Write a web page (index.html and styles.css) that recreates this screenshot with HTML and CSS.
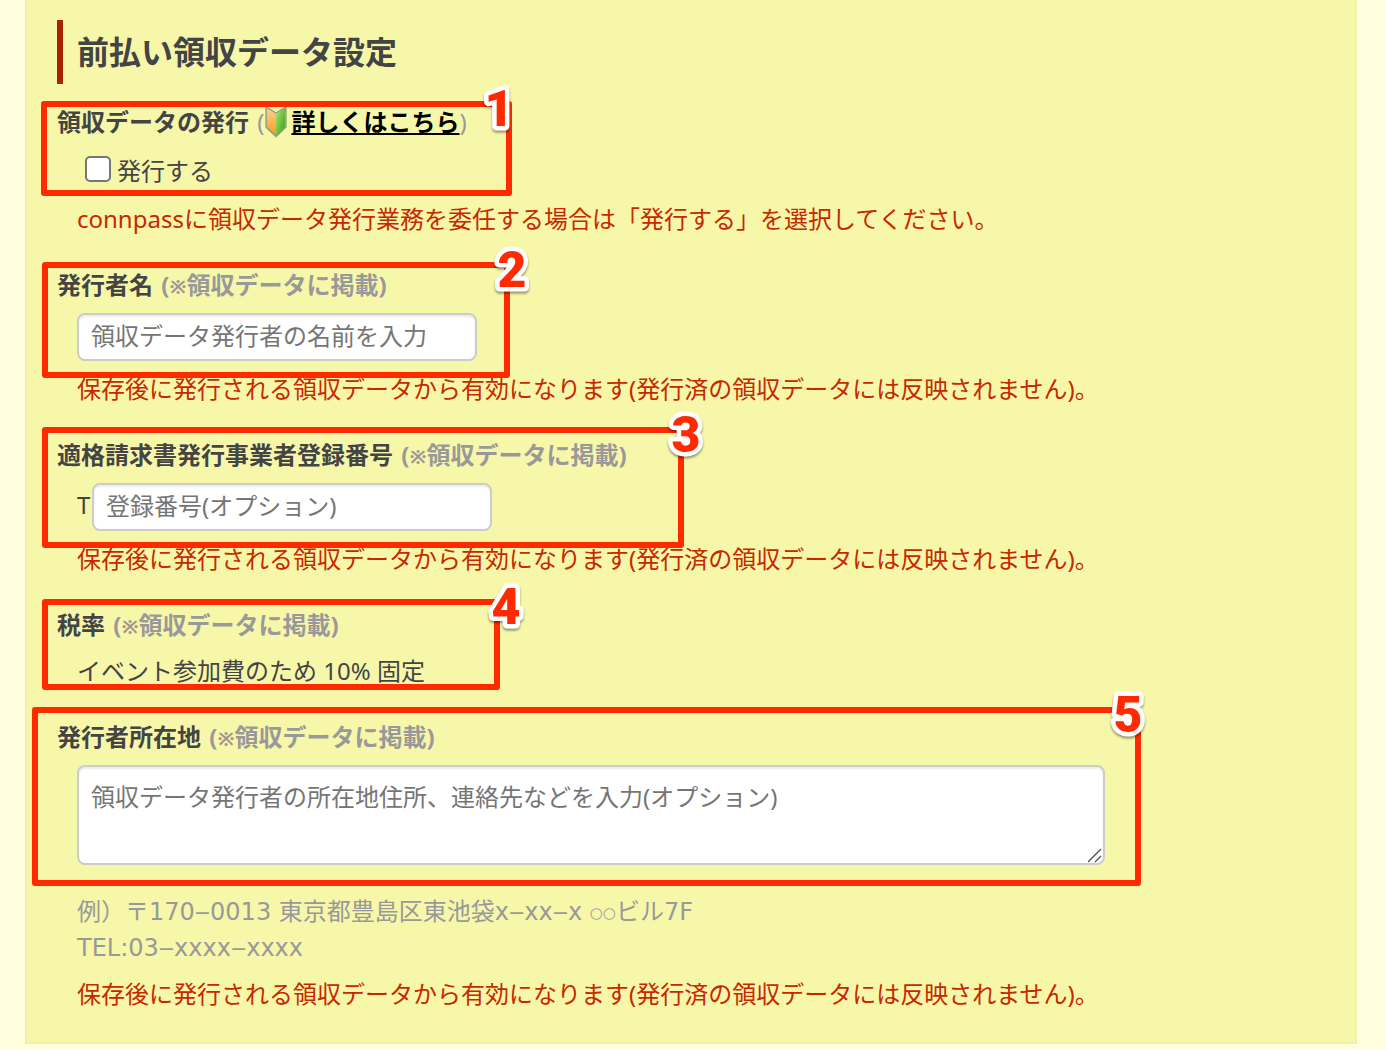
FILE: index.html
```html
<!DOCTYPE html>
<html lang="ja">
<head>
    <meta charset="UTF-8">
    <meta name="viewport" content="width=device-width, initial-scale=1.0">
    <title>前払い領収データ設定</title>
    <link rel="stylesheet" href="styles.css">
</head>
<body>
    <form class="panel">
        <h2 class="panel-title">前払い領収データ設定</h2>

        <div class="field">
            <div class="field-label">領収データの発行 <span class="note note-plain">(<svg class="beginner-icon" viewBox="0 0 24 32" aria-hidden="true">
                <defs>
                    <linearGradient id="leafLeft" x1="0" y1="0" x2="0" y2="1">
                        <stop offset="0" stop-color="#ffd08a"/>
                        <stop offset="1" stop-color="#f79a1c"/>
                    </linearGradient>
                    <linearGradient id="leafRight" x1="0" y1="0" x2="1" y2="1">
                        <stop offset="0" stop-color="#a4e878"/>
                        <stop offset="1" stop-color="#3f9a10"/>
                    </linearGradient>
                </defs>
                <path d="M2 1 L12 8 L22 1 V21 L12 31 L2 21 Z" fill="#8c8c6c" opacity=".5"/>
                <path d="M3 1 L12 7 V29 L3 20 Z" fill="url(#leafLeft)"/>
                <path d="M21 1 L12 7 V29 L21 20 Z" fill="url(#leafRight)"/>
                <path d="M2 0 L12 6 L22 0 V20 L12 29 L2 20 Z" fill="none" stroke="#85987a" stroke-width="1.2"/>
            </svg><a class="help-link" href="#">詳しくはこちら</a>)</span></div>
            <div class="field-body">
                <label class="check-row">
                    <input class="checkbox" type="checkbox">
                    <span>発行する</span>
                </label>
                <p class="hint">connpassに領収データ発行業務を委任する場合は「発行する」を選択してください。</p>
            </div>
            <div class="callout callout-1">
                <svg class="callout-number" viewBox="0 0 48 56"><text x="24" y="46">1</text></svg>
            </div>
        </div>

        <div class="field">
            <label class="field-label" for="issuerName">発行者名 <span class="note">(<span class="mark">※</span>領収データに掲載)</span></label>
            <div class="field-body">
                <input class="text-input" type="text" id="issuerName" placeholder="領収データ発行者の名前を入力">
                <p class="hint">保存後に発行される領収データから有効になります(発行済の領収データには反映されません)。</p>
            </div>
            <div class="callout callout-2">
                <svg class="callout-number" viewBox="0 0 48 56"><text x="24" y="46">2</text></svg>
            </div>
        </div>

        <div class="field">
            <label class="field-label" for="registrationNumber">適格請求書発行事業者登録番号 <span class="note">(<span class="mark">※</span>領収データに掲載)</span></label>
            <div class="field-body">
                <div class="prefix-row">
                    <span class="prefix">T</span>
                    <input class="text-input" type="text" id="registrationNumber" placeholder="登録番号(オプション)">
                </div>
                <p class="hint">保存後に発行される領収データから有効になります(発行済の領収データには反映されません)。</p>
            </div>
            <div class="callout callout-3">
                <svg class="callout-number" viewBox="0 0 48 56"><text x="24" y="46">3</text></svg>
            </div>
        </div>

        <div class="field">
            <div class="field-label">税率 <span class="note">(<span class="mark">※</span>領収データに掲載)</span></div>
            <div class="field-body">
                <p class="value">イベント参加費のため 10% 固定</p>
            </div>
            <div class="callout callout-4">
                <svg class="callout-number" viewBox="0 0 48 56"><text x="24" y="46">4</text></svg>
            </div>
        </div>

        <div class="field">
            <label class="field-label" for="issuerAddress">発行者所在地 <span class="note">(<span class="mark">※</span>領収データに掲載)</span></label>
            <div class="field-body">
                <textarea class="text-area" id="issuerAddress" placeholder="領収データ発行者の所在地住所、連絡先などを入力(オプション)"></textarea>
                <p class="sample">例）〒170‒0013 東京都豊島区東池袋x‒xx‒x <span class="circles">○○</span>ビル7F<br>TEL:03‒xxxx‒xxxx</p>
                <p class="hint">保存後に発行される領収データから有効になります(発行済の領収データには反映されません)。</p>
            </div>
            <div class="callout callout-5">
                <svg class="callout-number" viewBox="0 0 48 56"><text x="24" y="46">5</text></svg>
            </div>
        </div>
    </form>
</body>
</html>
```
FILE: styles.css
```css
* {
    box-sizing: border-box;
}
body {
    margin: 0;
    padding: 0 29px 6px 25px;
    background: #ffffdd;
    color: #444;
    font-family: "Noto Sans", "Noto Sans CJK JP", sans-serif;
    font-size: 24px;
    line-height: 36px;
}
p {
    margin: 0;
}
.panel {
    padding: 20px 30px 30px;
    background: #f7f7aa;
    border: 2px solid #f0f0a8;
    border-top: 0;
}
.panel-title {
    margin: 0 0 20px;
    padding-left: 14px;
    border-left: 6px solid #a82400;
    font-size: 32px;
    line-height: 64px;
}

/* Form fields */
.field {
    position: relative;
    margin-bottom: 30px;
}
.field:last-child {
    margin-bottom: 0;
}
.field-label {
    display: block;
    margin-bottom: 10px;
    font-weight: bold;
}
.field-body {
    display: flex;
    flex-direction: column;
    align-items: flex-start;
    gap: 10px;
    padding-left: 20px;
}
.note {
    margin-left: 2px;
    color: #999;
}
.note-plain {
    font-weight: normal;
}
.mark {
    font-size: 20px;
    line-height: 1;
}
.help-link {
    color: #000;
    font-weight: bold;
    text-decoration: underline;
}
.beginner-icon {
    width: 24px;
    height: 32px;
    margin: -12px 3px -8px 0;
    vertical-align: middle;
}
.check-row {
    display: flex;
    align-items: center;
    gap: 6px;
    min-height: 41px;
    padding-left: 8px;
}
.checkbox {
    appearance: none;
    width: 26px;
    height: 26px;
    margin: 0 0 4px;
    background: #fff;
    border: 2px solid #767676;
    border-radius: 5px;
}
.checkbox:checked {
    background: #0075ff;
}
.hint {
    color: #c82800;
}
.sample {
    margin-top: 19px;
    color: #999;
    font-family: "DejaVu Sans", "Noto Sans CJK JP", sans-serif;
}
.circles {
    font-size: 15px;
    line-height: 1;
    vertical-align: 2px;
}
.prefix-row {
    display: flex;
    align-items: center;
}
.prefix {
    width: 15px;
    padding-bottom: 4px;
}
.text-input,
.text-area {
    margin: 0;
    background: #fff;
    border: 2px solid #ccc;
    border-radius: 8px;
    box-shadow: inset 0 2px 2px rgba(0, 0, 0, 0.075);
    color: #444;
    font: inherit;
}
.text-input {
    width: 400px;
    height: 48px;
    padding: 0 12px 4px;
}
.text-area {
    display: block;
    width: 100%;
    max-width: 1028px;
    height: 100px;
    padding: 12px;
    resize: both;
}
.text-area::-webkit-resizer {
    background: url("data:image/svg+xml,%3Csvg xmlns='http://www.w3.org/2000/svg' width='15' height='15'%3E%3Cpath d='M0 14L13 1M7 14L13 8' stroke='%23555' stroke-width='1.4'/%3E%3C/svg%3E") no-repeat;
}
.text-input::placeholder,
.text-area::placeholder {
    color: #757575;
}

/* Numbered frames over the fields */
.callout {
    position: absolute;
    left: -15px;
    border: 6px solid #ff2a00;
    border-radius: 3px;
    pointer-events: none;
}
.callout-number {
    position: absolute;
    top: -27px;
    right: -32px;
    width: 48px;
    height: 56px;
    overflow: visible;
    fill: #ff2a00;
    stroke: #fff;
    stroke-width: 9px;
    stroke-linejoin: round;
    paint-order: stroke;
    font-family: Roboto, Arial, sans-serif;
    font-size: 50px;
    font-weight: 900;
    text-anchor: middle;
    filter: drop-shadow(0 2px 1px rgba(0, 0, 0, 0.4));
}
.callout-1 {
    top: -3px;
    left: -16px;
    width: 471px;
    height: 95px;
}
.callout-2 {
    top: -5px;
    width: 468px;
    height: 116px;
}
.callout-3 {
    top: -10px;
    width: 642px;
    height: 121px;
}
.callout-4 {
    top: -8px;
    width: 458px;
    height: 91px;
}
.callout-5 {
    top: -12px;
    left: -25px;
    width: 1109px;
    height: 179px;
}
.callout-1 .callout-number,
.callout-5 .callout-number {
    right: -17px;
}
.callout-4 .callout-number {
    right: -36px;
}
```
